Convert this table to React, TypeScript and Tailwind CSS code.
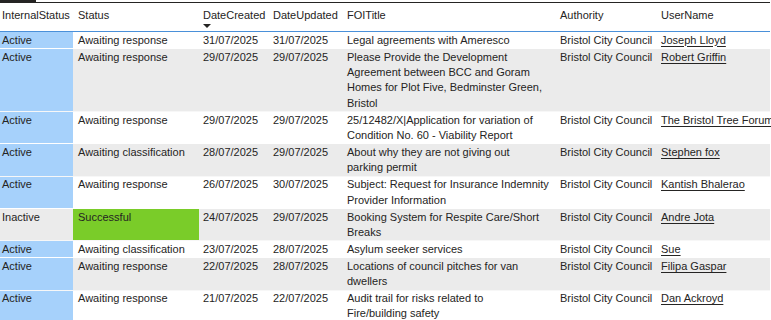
import * as React from "react"

type Row = {
  internal: string
  status: string
  created: string
  updated: string
  title: string[]
  authority: string
  user: string
}

const rows: Row[] = [
  { internal: "Active", status: "Awaiting response", created: "31/07/2025", updated: "31/07/2025", title: ["Legal agreements with Ameresco"], authority: "Bristol City Council", user: "Joseph Lloyd" },
  { internal: "Active", status: "Awaiting response", created: "29/07/2025", updated: "29/07/2025", title: ["Please Provide the Development", "Agreement between BCC and Goram", "Homes for Plot Five, Bedminster Green,", "Bristol"], authority: "Bristol City Council", user: "Robert Griffin" },
  { internal: "Active", status: "Awaiting response", created: "29/07/2025", updated: "29/07/2025", title: ["25/12482/X|Application for variation of", "Condition No. 60 - Viability Report"], authority: "Bristol City Council", user: "The Bristol Tree Forum" },
  { internal: "Active", status: "Awaiting classification", created: "28/07/2025", updated: "29/07/2025", title: ["About why they are not giving out", "parking permit"], authority: "Bristol City Council", user: "Stephen fox" },
  { internal: "Active", status: "Awaiting response", created: "26/07/2025", updated: "30/07/2025", title: ["Subject: Request for Insurance Indemnity", "Provider Information"], authority: "Bristol City Council", user: "Kantish Bhalerao" },
  { internal: "Inactive", status: "Successful", created: "24/07/2025", updated: "29/07/2025", title: ["Booking System for Respite Care/Short", "Breaks"], authority: "Bristol City Council", user: "Andre Jota" },
  { internal: "Active", status: "Awaiting classification", created: "23/07/2025", updated: "28/07/2025", title: ["Asylum seeker services"], authority: "Bristol City Council", user: "Sue" },
  { internal: "Active", status: "Awaiting response", created: "22/07/2025", updated: "28/07/2025", title: ["Locations of council pitches for van", "dwellers"], authority: "Bristol City Council", user: "Filipa Gaspar" },
  { internal: "Active", status: "Awaiting response", created: "21/07/2025", updated: "22/07/2025", title: ["Audit trail for risks related to", "Fire/building safety"], authority: "Bristol City Council", user: "Dan Ackroyd" },
]

const cols = "grid grid-cols-[73px_126px_70px_74px_213px_101px_114px]"

export default function App() {
  return (
    <div className="h-[320px] w-[771px] overflow-hidden bg-white font-['Segoe_UI','Liberation_Sans',Arial,sans-serif] text-[11px] leading-[15.33px] text-[#252423]">
      <div className="h-[2px] w-[36px] bg-[#252423]" />
      <div className="w-[770px] border-t border-[#252423]">
        <div className={`${cols} h-[29px] border-b border-[#4a90d9] pt-[5px]`}>
          <div className="pl-[2px]">InternalStatus</div>
          <div className="pl-[5px]">Status</div>
          <div className="pl-[4px]">
            <div>DateCreated</div>
            <svg width="8" height="4" viewBox="0 0 8 4" className="mt-[1px] block">
              <path d="M0 0h8L4 4z" fill="#252423" />
            </svg>
          </div>
          <div className="pl-[4px]">DateUpdated</div>
          <div className="pl-[4px]">FOITitle</div>
          <div className="pl-[4px]">Authority</div>
          <div className="pl-[4px]">UserName</div>
        </div>
        {rows.map((r, i) => (
          <div
            key={i}
            className={`${cols} border-b border-white/60 ${i % 2 === 1 ? "bg-[#ebebeb]" : "bg-white"}`}
          >
            <div className={`pt-[0.67px] pl-[2px] ${r.internal === "Active" ? "bg-[#a6d1fb]" : ""}`}>{r.internal}</div>
            <div className={`pt-[0.67px] pl-[5px] ${r.status === "Successful" ? "bg-[#7acc29]" : ""}`}>{r.status}</div>
            <div className="pt-[0.67px] pl-[4px]">{r.created}</div>
            <div className="pt-[0.67px] pl-[4px]">{r.updated}</div>
            <div className="pt-[0.67px] pl-[4px]">
              {r.title.map((t, j) => (
                <div key={j} className="whitespace-nowrap">{t}</div>
              ))}
            </div>
            <div className="whitespace-nowrap pt-[0.67px] pl-[4px]">{r.authority}</div>
            <div className="whitespace-nowrap pt-[0.67px] pl-[4px]">
              <span className="underline underline-offset-2">{r.user}</span>
            </div>
          </div>
        ))}
      </div>
    </div>
  )
}
